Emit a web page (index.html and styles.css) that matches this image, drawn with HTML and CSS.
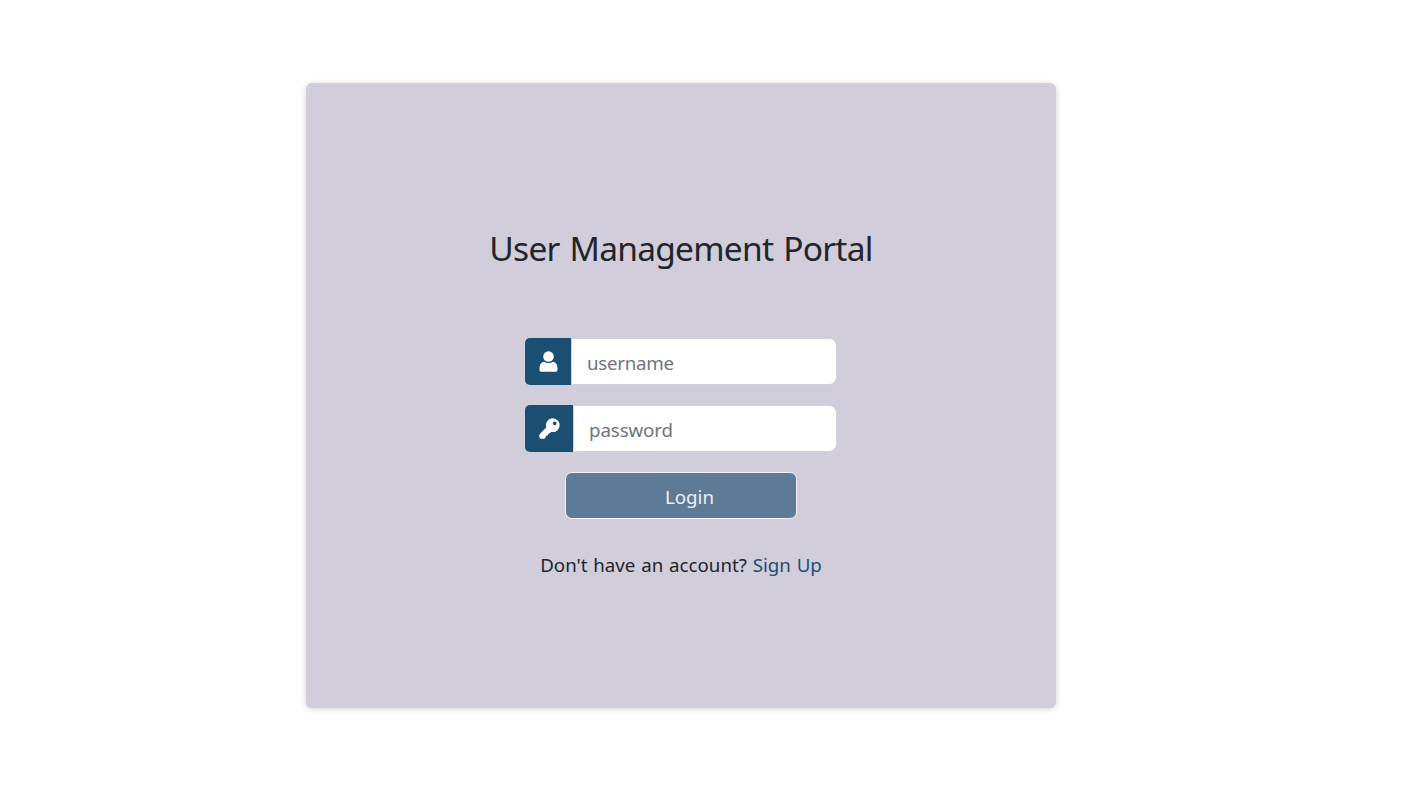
FILE: index.html
```html
<!DOCTYPE html>
<html lang="en">
<head>
<meta charset="utf-8">
<title>User Management Portal</title>
<link rel="stylesheet" href="styles.css">
</head>
<body>
<main class="card">
  <h1 class="title">User Management Portal</h1>
  <form class="form">
    <div class="group">
      <span class="addon addon-user"><svg class="icon-user" viewBox="0 0 19 21"><circle cx="9.500" cy="5.500" r="5.300"/><path d="M5 10.700C6.300 11.600 7.800 12 9.500 12s3.200-.4 4.500-1.300c2.800.4 4.500 2.800 4.500 6.300v1.500c0 1.600-.8 2.300-2.300 2.300H2.800C1.300 20.800.5 20.100.5 18.500V17c0-3.500 1.700-5.900 4.500-6.300z"/></svg></span>
      <input class="input" type="text" placeholder="username">
    </div>
    <div class="group">
      <span class="addon addon-key"><svg class="icon-key" viewBox="0 0 21 21"><path fill-rule="evenodd" d="M13.900.3a6.900 6.900 0 1 1-1.800 13.600L10.800 15.300l-1.500.4-.6 1.900-1.800.4-.5 2-1.200.7H1.700Q.3 20.700.3 19.300v-2.100q0-.7.5-1.200l6.500-6.600A6.900 6.900 0 0 1 13.900.3zM15.700 3.400a1.900 1.900 0 1 0 0 3.800 1.900 1.900 0 1 0 0-3.800z"/></svg></span>
      <input class="input input-password" type="password" placeholder="password">
    </div>
    <button class="login" type="button">Login</button>
  </form>
  <p class="signup"><span class="question">Don't have an account?</span> <a class="link" href="#">Sign Up</a></p>
</main>
</body>
</html>
```
FILE: styles.css
```css
* { box-sizing: border-box; }
body {
  min-height: 100vh;
  margin: 0;
  padding: 83px 0 0 306px;
  background: #fff;
  color: #212529;
  font-family: "Segoe UI", "Noto Sans", sans-serif;
  font-size: 18.7px;
}
.card {
  display: flex;
  flex-direction: column;
  align-items: center;
  width: 750px;
  height: 625px;
  padding-top: 144px;
  background: #d1cddb;
  border-radius: 6px;
  box-shadow: 0 1px 6px rgba(0, 0, 0, .18);
}
.title {
  margin: 0;
  font-size: 33.5px;
  font-weight: 400;
  line-height: 42px;
  letter-spacing: -.75px;
  word-spacing: 2px;
  white-space: nowrap;
}
.form {
  display: flex;
  flex-direction: column;
  align-items: center;
  gap: 20px;
  width: 312px;
  margin-top: 69px;
}
.group { display: flex; width: 100%; height: 47px; }
.addon {
  display: flex;
  align-items: center;
  justify-content: center;
  flex: none;
  background: #1b4f72;
  border-radius: 5px 0 0 5px;
}
.addon-user { width: 46px; }
.addon-key { width: 48px; }
.icon-user { width: 19px; height: 21px; fill: #fff; }
.icon-key { width: 21px; height: 21px; fill: #fff; }
.input {
  flex: 1;
  min-width: 0;
  padding: 2px 15px 0;
  border: 1px solid #ced4da;
  border-radius: 0 8px 8px 0;
  background: #fff;
  color: #495057;
  font: inherit;
  letter-spacing: -.25px;
}
.input-password { letter-spacing: -.1px; }
.input::placeholder { color: #6c757d; opacity: 1; }
.login {
  width: 232px;
  height: 47px;
  padding: 2px 0 0 17px;
  border: 1px solid #f4f3f7;
  border-radius: 7px;
  background: #5d7b97;
  color: #f0eff5;
  font: inherit;
}
.signup { margin: 32px 0 0; line-height: 28px; white-space: nowrap; word-spacing: 1px; }
.link { color: #1b4f72; text-decoration: none; }
```
